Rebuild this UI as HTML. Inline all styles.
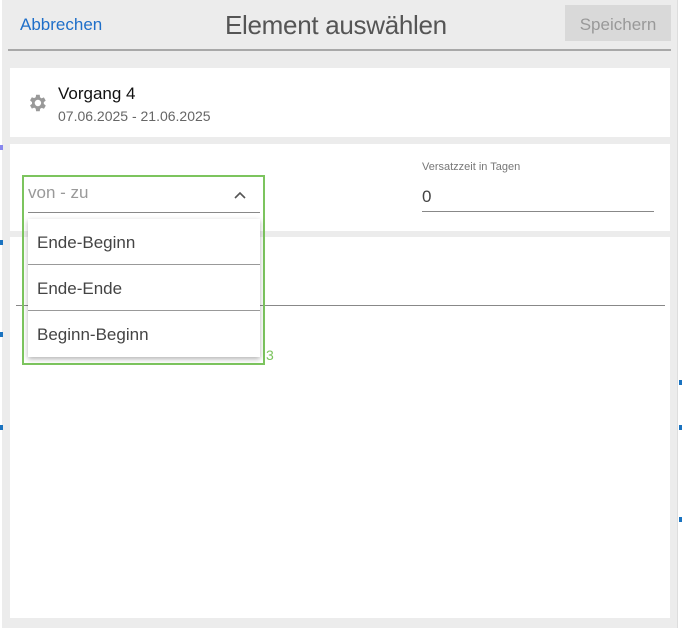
<!DOCTYPE html>
<html><head><style>
*{margin:0;padding:0;box-sizing:border-box}
body{width:682px;height:628px;overflow:hidden;background:#fff;font-family:"Liberation Sans",sans-serif;position:relative}
.a{position:absolute}
</style></head><body>
<div class="a" style="left:2px;top:0;width:676px;height:628px;background:#ececec;border-right:1px solid #ddd"></div>
<div class="a" style="left:0;top:145px;width:3px;height:5px;background:#8888ee"></div>
<div class="a" style="left:0;top:240px;width:3px;height:5px;background:#1a73c0"></div>
<div class="a" style="left:0;top:332px;width:3px;height:5px;background:#1a73c0"></div>
<div class="a" style="left:0;top:425px;width:3px;height:5px;background:#1a73c0"></div>
<div class="a" style="left:679px;top:380px;width:3px;height:5px;background:#1a73c0"></div>
<div class="a" style="left:679px;top:425px;width:3px;height:5px;background:#1a73c0"></div>
<div class="a" style="left:679px;top:517px;width:3px;height:5px;background:#1a73c0"></div>
<div class="a" style="left:20px;top:15px;font-size:17px;color:#1f6fc9">Abbrechen</div>
<div class="a" style="left:225px;top:10px;font-size:26px;color:#555;letter-spacing:-0.3px">Element auswählen</div>
<div class="a" style="left:565px;top:5px;width:106px;height:36px;background:#d9d9d9;color:#999;font-size:17px;text-align:center;line-height:40px">Speichern</div>
<div class="a" style="left:8px;top:49px;width:663px;height:2px;background:#a8a8a8"></div>
<div class="a" style="left:10px;top:68px;width:660px;height:69px;background:#fff"></div>
<svg class="a" style="left:26px;top:92px" width="22" height="22" viewBox="0 0 24 24"><path fill="#999" d="M19.4 13a7.5 7.5 0 0 0 0-2l2.1-1.6-2-3.5-2.5 1a7 7 0 0 0-1.7-1L15 3h-4l-.4 2.7a7 7 0 0 0-1.7 1l-2.5-1-2 3.5L6.6 11a7.5 7.5 0 0 0 0 2l-2.2 1.6 2 3.5 2.5-1a7 7 0 0 0 1.7 1L11 21h4l.4-2.7a7 7 0 0 0 1.7-1l2.5 1 2-3.5zM13 15.5A3.5 3.5 0 1 1 13 8.5a3.5 3.5 0 0 1 0 7z"/></svg>
<div class="a" style="left:58px;top:84px;font-size:17px;color:#111">Vorgang 4</div>
<div class="a" style="left:58px;top:108px;font-size:14px;color:#666">07.06.2025 - 21.06.2025</div>
<div class="a" style="left:10px;top:144px;width:660px;height:87px;background:#fff"></div>
<div class="a" style="left:422px;top:161px;font-size:11px;color:#777">Versatzzeit in Tagen</div>
<div class="a" style="left:422px;top:187px;font-size:17px;color:#444">0</div>
<div class="a" style="left:422px;top:211px;width:232px;height:1px;background:#888"></div>
<div class="a" style="left:10px;top:237px;width:660px;height:381px;background:#fff"></div>
<div class="a" style="left:16px;top:305px;width:649px;height:1px;background:#888"></div>
<div class="a" style="left:22px;top:175px;width:243px;height:190px;border:2px solid #7cc45e"></div>
<div class="a" style="left:266px;top:347px;font-size:14px;color:#7cc45e">3</div>
<div class="a" style="left:28px;top:183px;font-size:17px;color:#999">von - zu</div>
<svg class="a" style="left:233px;top:190px" width="14" height="10" viewBox="0 0 14 10"><path d="M2 8L7 3l5 5" stroke="#555" stroke-width="1.6" fill="none"/></svg>
<div class="a" style="left:28px;top:212px;width:232px;height:1px;background:#888"></div>
<div class="a" style="left:28px;top:219px;width:232px;height:138px;background:#fff;box-shadow:0 2px 5px rgba(0,0,0,.3)">
<div style="height:46px;border-bottom:1px solid #999;padding:14px 0 0 9px;font-size:17px;color:#444">Ende-Beginn</div>
<div style="height:46px;border-bottom:1px solid #999;padding:14px 0 0 9px;font-size:17px;color:#444">Ende-Ende</div>
<div style="height:46px;padding:14px 0 0 9px;font-size:17px;color:#444">Beginn-Beginn</div>
</div>
</body></html>
